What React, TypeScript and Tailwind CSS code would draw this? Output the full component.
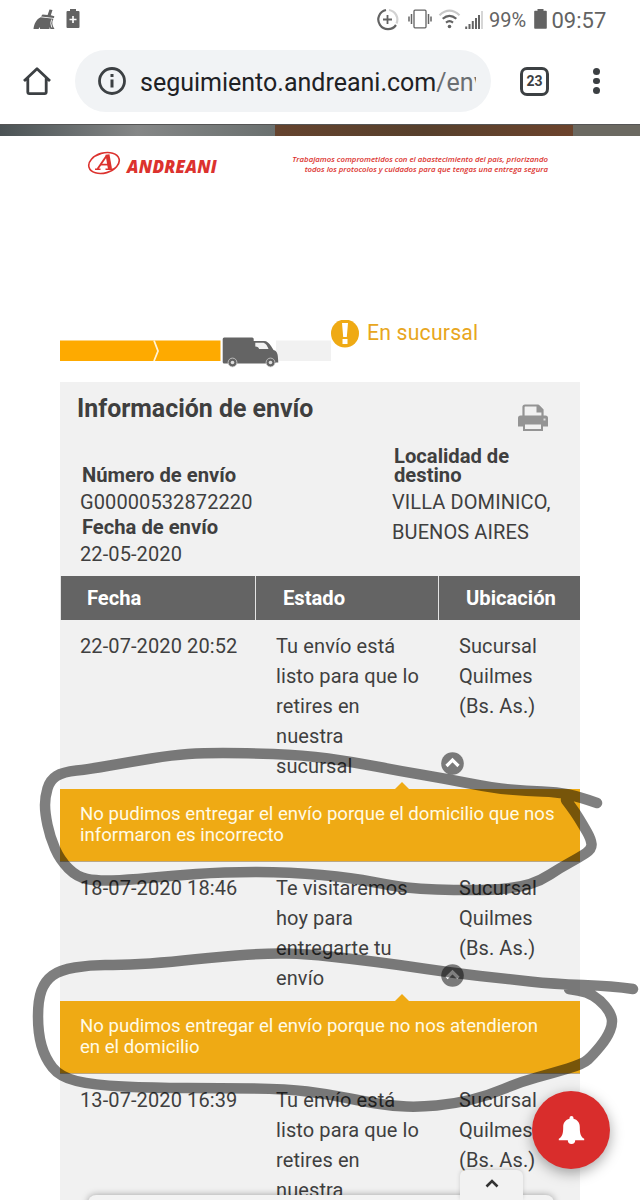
type Point = [number, number];

type Movement = {
  date: string;
  status: string[];
  place: string[];
  alert?: string[];
};

const movements: Movement[] = [
  {
    date: "22-07-2020 20:52",
    status: ["Tu envío está", "listo para que lo", "retires en", "nuestra", "sucursal"],
    place: ["Sucursal", "Quilmes", "(Bs. As.)"],
    alert: ["No pudimos entregar el envío porque el domicilio que nos", "informaron es incorrecto"]
  },
  {
    date: "18-07-2020 18:46",
    status: ["Te visitaremos", "hoy para", "entregarte tu", "envío"],
    place: ["Sucursal", "Quilmes", "(Bs. As.)"],
    alert: ["No pudimos entregar el envío porque no nos atendieron", "en el domicilio"]
  },
  {
    date: "13-07-2020 16:39",
    status: ["Tu envío está", "listo para que lo", "retires en", "nuestra"],
    place: ["Sucursal", "Quilmes", "(Bs. As.)"]
  }
];

const firstLoop: Point[] = [
  [597, 803], [580, 797], [557, 792], [527, 791], [493, 788], [447, 779], [400, 771], [353, 762],
  [303, 755], [243, 753], [203, 753], [173, 755], [130, 762], [90, 769], [63, 772], [50, 780],
  [45, 797], [45, 813], [50, 837], [60, 860], [77, 877], [97, 881], [127, 880], [170, 876],
  [223, 872], [290, 872], [353, 878], [393, 886], [420, 889], [453, 890], [493, 890], [520, 887],
  [540, 881], [560, 868], [580, 857], [592, 849], [591, 839], [583, 825], [575, 812], [566, 800]
];

const secondLoop: Point[] = [
  [633, 989], [613, 986], [553, 984], [507, 979], [453, 973], [400, 965], [353, 959], [307, 954],
  [267, 953], [207, 958], [160, 963], [120, 965], [90, 965], [60, 970], [45, 981], [38, 1000],
  [38, 1033], [45, 1058], [60, 1077], [93, 1085], [153, 1088], [220, 1088], [287, 1089], [327, 1094],
  [367, 1102], [393, 1106], [420, 1107], [453, 1104], [487, 1096], [520, 1082], [553, 1073],
  [583, 1064], [593, 1055], [607, 1038], [613, 1023], [610, 1012], [600, 1000], [587, 992], [569, 989]
];

// joins the points with curves that pass through the middle of each segment
function smooth(points: Point[]) {
  let d = `M${points[0][0]} ${points[0][1]}`;
  for (let i = 1; i < points.length - 1; i++) {
    const [x, y] = points[i];
    const [nx, ny] = points[i + 1];
    d += ` Q${x} ${y} ${(x + nx) / 2} ${(y + ny) / 2}`;
  }
  const last = points[points.length - 1];
  return `${d} L${last[0]} ${last[1]}`;
}

function StatusBar() {
  return (
    <div className="flex h-10 items-center pl-[33px] text-[#636363]">
      <svg className="-mt-px" width="22" height="22" viewBox="0 0 22 22" fill="currentColor">
        <path d="M16.5 0.5 L19.5 1 L17.8 6.2 L21.3 7.3 L21 9 L8 7.4 L9.5 5.6 L14.6 6 Z" />
        <path d="M7.6 8.2 L20.5 9.8 C18.5 13 19 16.5 21.5 20 H17.5 L16.5 18 V20 H7 L7 18 L5.5 20 H0.5 C1 15 3 10.5 7.6 8.2Z" />
        <path d="M18.6 10.5 Q16.8 14 18.8 18.5" fill="none" stroke="#fff" strokeWidth="0.9" />
      </svg>
      <svg className="-mt-0.5 ml-[11px]" width="14" height="20" viewBox="0 0 14 20">
        <path d="M4 0h6v2h2.5a1 1 0 0 1 1 1v15a1 1 0 0 1-1 1h-11a1 1 0 0 1-1-1V3a1 1 0 0 1 1-1H4z" fill="currentColor" />
        <path d="M7 7v7M3.5 10.5h7" stroke="#fff" strokeWidth="1.6" />
      </svg>
      <svg className="-mt-0.5 ml-[296px]" width="23" height="23" viewBox="0 0 23 23" fill="none" strokeWidth="2.2">
        <path d="M13 2a9.7 9.7 0 0 1 7.5 13.5" stroke="#d2d2d2" />
        <path d="M10 2a9.7 9.7 0 1 0 10 15" stroke="currentColor" />
        <path d="M11.5 7v9M7 11.5h9" stroke="currentColor" strokeWidth="1.8" />
      </svg>
      <svg className="-mt-0.5 ml-[9px]" width="24" height="20" viewBox="0 0 24 20" fill="none" stroke="currentColor" strokeWidth="1.3">
        <rect x="6" y="1.2" width="12" height="17.6" rx="1" />
        <path d="M3.5 5v10M1 7.5v5M20.5 5v10M23 7.5v5" strokeWidth="1.5" />
      </svg>
      <svg className="-mt-0.5 ml-[6px]" width="23" height="20" viewBox="0 0 23 20" fill="none" strokeWidth="2.2">
        <path d="M1.5 6.2Q11.5 -2.8 21.5 6.2" stroke="#c8c8c8" />
        <path d="M4.7 9.8Q11.5 3.8 18.3 9.8M8 13.6Q11.5 10.8 15 13.6" stroke="currentColor" />
        <circle cx="11.5" cy="17.5" r="1.8" fill="currentColor" />
      </svg>
      <svg className="-mt-0.5 ml-[4px]" width="18" height="19" viewBox="0 0 18 19" fill="none" stroke="currentColor" strokeWidth="2">
        <path d="M1.2 16.5V19M4.5 14V19M7.8 11V19M11 8V19M14 5V19" />
        <path d="M17 1V19" stroke="#c8c8c8" strokeWidth="1.5" />
      </svg>
      <span className="ml-[6px] w-[45px] text-[20px] whitespace-nowrap">99%</span>
      <svg className="-mt-0.5" width="13" height="20" viewBox="0 0 13 20" fill="currentColor">
        <path d="M3.5 0h6v1.7H12a.8.8 0 0 1 .8.8V19a.8.8 0 0 1-.8.8H1a.8.8 0 0 1-.8-.8V2.5A.8.8 0 0 1 1 1.7h2.5z" />
      </svg>
      <span className="ml-[4.5px] text-[22px]">09:57</span>
    </div>
  );
}

function Toolbar() {
  return (
    <div className="flex h-[84px] items-center pb-0.5 pl-[23px] text-[#3c4043]">
      <svg width="28" height="28" viewBox="0 0 28 28" fill="none" stroke="currentColor" strokeWidth="2.8">
        <path d="M1 14 14 1.8 27 14M4.8 11V25a1.6 1.6 0 0 0 1.6 1.6h15.2A1.6 1.6 0 0 0 23.2 25V11" strokeLinejoin="round" />
      </svg>
      <div className="ml-6 flex h-[62px] w-[416px] items-center rounded-full bg-[#f1f3f5] pl-[23px]">
        <svg width="28" height="28" viewBox="0 0 28 28" fill="none" stroke="currentColor">
          <circle cx="14" cy="14" r="12.5" strokeWidth="2.8" />
          <path d="M14 12.5v8M14 7v3" strokeWidth="3" />
        </svg>
        <div className="mt-[3px] ml-[14px] w-[336px] overflow-hidden text-[25px] leading-[34px] whitespace-nowrap text-[#202124]">
          seguimiento.andreani.com<span className="text-[#6a6e72]">/env</span>
        </div>
      </div>
      <div className="ml-[29px] flex size-[29px] items-center justify-center rounded-[7px] border-[3px] border-[#3c4043] text-[14px] font-bold">
        23
      </div>
      <div className="ml-[44px] flex flex-col gap-[3px]">
        <i className="size-[6.5px] rounded-full bg-[#3c4043]" />
        <i className="size-[6.5px] rounded-full bg-[#3c4043]" />
        <i className="size-[6.5px] rounded-full bg-[#3c4043]" />
      </div>
    </div>
  );
}

function Brand() {
  return (
    <div className="flex h-[184px] items-start pt-[15px] pl-[87px] text-[#dc322e]">
      <svg width="34" height="24" viewBox="0 0 34 24" fill="none" stroke="currentColor">
        <ellipse cx="17" cy="12" rx="15.6" ry="10" strokeWidth="1.6" transform="rotate(-16 17 12)" />
        {/* slanted monogram inside the oval */}
        <path d="M10.5 18 19.8 4.5" strokeWidth="1.9" />
        <path d="M13.5 13.6H22" strokeWidth="1.7" />
        <path d="M20.5 3.5 23 18" strokeWidth="4" />
        <path d="M8 18.3h5.5M18.5 18.3h8.5" strokeWidth="1.4" />
      </svg>
      <span className="mt-[6px] ml-[6px] w-[165px] font-['Open_Sans'] text-[17px] leading-[20px] font-extrabold tracking-[0.25px] italic">
        ANDREANI
      </span>
      <p className="mt-1 w-[256px] text-right font-['Open_Sans'] text-[7.8px] leading-[9.5px] font-semibold whitespace-nowrap italic">
        Trabajamos comprometidos con el abastecimiento del país, priorizando
        <br />
        todos los protocolos y cuidados para que tengas una entrega segura
      </p>
    </div>
  );
}

function Progress() {
  return (
    <div className="flex h-[62px] items-start pl-[60px]">
      <svg className="mt-4 shrink-0" width="271" height="32" viewBox="0 0 271 32">
        <path d="M0 4.5h160.500V25H0z" fill="#feaa00" />
        <path d="M94 4.5 98 15 94 25" fill="none" stroke="#fff3d6" strokeWidth="1.8" />
        <path d="M216 4.5h55V25h-55z" fill="#f1f1f1" />
        <path
          d="M162.7 3a1.5 1.5 0 0 1 1.5-1.5h28A1.5 1.5 0 0 1 193.7 3v2H204c3 0 5 2 7 5l2.5 4c3 .8 4 3 4.3 6l.5 6.5h-2.5l-1 1H164.200a1.5 1.5 0 0 1-1.5-1.5z"
          fill="#646464"
        />
        <path d="M195.3 6.8h7.2c3 0 4.5 2.5 6 6.2H199c0-1.3-1.5-2.5-3.7-2.5z" fill="#f1f1f1" />
        <g fill="#646464" stroke="#d0d0d0" strokeWidth="0.8">
          <circle cx="172.5" cy="26.5" r="4.4" />
          <circle cx="210.5" cy="26.5" r="4.4" />
        </g>
        <circle cx="172.5" cy="26.5" r="1.8" fill="#ddd" />
        <circle cx="210.5" cy="26.5" r="1.8" fill="#ddd" />
      </svg>
      <svg className="shrink-0" width="28" height="28" viewBox="0 0 28 28">
        <circle cx="14" cy="13.5" r="14" fill="#efaa14" />
        <path d="M11 3h6l-1.2 14h-3.6zM11.5 19h5v5h-5z" fill="#fff" />
      </svg>
      <span className="ml-2 text-[21.2px] leading-[26px] tracking-[0.2px] whitespace-nowrap text-[#e8a620]">En sucursal</span>
    </div>
  );
}

function PrinterIcon() {
  return (
    <svg className="ml-[124px]" width="32" height="28" viewBox="0 0 32 28">
      <path d="M6.5 12V3a1.5 1.5 0 0 1 1.5-1.5h13L25.5 6v6" fill="#f1f1f1" stroke="#949494" strokeWidth="2.2" />
      <path d="M19.5 1.5h3l3.5 4v3h-6.5z" fill="#949494" />
      <path d="M3.5 11.5h25a2.5 2.5 0 0 1 2.5 2.5v8.5H1V14a2.5 2.5 0 0 1 2.5-2.5z" fill="#949494" />
      <path d="M7 19.5h18V26H7z" fill="#f1f1f1" stroke="#949494" strokeWidth="2" />
      <path d="M26.5 14.5h2v2h-2z" fill="#ddd" />
    </svg>
  );
}

function Alert({ lines }: { lines: string[] }) {
  return (
    <div className="relative h-[73px] border-b border-[#b9a888] bg-[#efaa14] pt-[15px] pl-5 text-[18.6px] leading-[21px] whitespace-nowrap text-[#fffbe6]">
      <svg className="absolute -top-[7px] left-[335px]" width="14" height="7" viewBox="0 0 14 7">
        <path d="M0 7 7 0 14 7z" fill="#efaa14" />
      </svg>
      {/* collapse toggle */}
      <svg className="absolute -top-[37px] left-[381px]" width="23" height="23" viewBox="0 0 23 23">
        <circle cx="11.5" cy="11.5" r="11.3" fill="#646464" fillOpacity="0.85" />
        <path d="M5.5 14 11.5 8 17.5 14" fill="none" stroke="#fff" strokeWidth="3.2" />
      </svg>
      {lines.map((line) => (
        <div key={line}>{line}</div>
      ))}
    </div>
  );
}

function Lines({ items }: { items: string[] }) {
  return (
    <div>
      {items.map((item) => (
        <div key={item}>{item}</div>
      ))}
    </div>
  );
}

function Shipment() {
  return (
    <div className="ml-[60px] w-[520px] bg-[#f1f1f1] whitespace-nowrap text-[#3f3f3f]">
      <div className="flex h-[194px]">
        <div className="w-[333px] pt-3 pl-[17px]">
          <h2 className="text-[24.9px] leading-[30px] font-bold">Información de envío</h2>
          <div className="mt-[37px] pl-[3px] text-[20px]">
            <h3 className="pl-0.5 text-[20.2px] leading-[28px] font-bold">Número de envío</h3>
            <p className="leading-[26px] tracking-[0.1px]">G00000532872220</p>
            <h3 className="pl-0.5 text-[20.2px] leading-[25px] font-bold">Fecha de envío</h3>
            <p className="leading-[28px] tracking-[0.1px]">22-05-2020</p>
          </div>
        </div>
        <div className="pt-[22px] text-[20px]">
          <PrinterIcon />
          <h3 className="mt-[15px] pl-px text-[20.2px] leading-[19px] font-bold">
            Localidad de
            <br />
            destino
          </h3>
          <p className="mt-[2px] -ml-px leading-[30px] tracking-[0.1px]">
            VILLA DOMINICO,
            <br />
            BUENOS AIRES
          </p>
        </div>
      </div>
      <div className="grid h-11 grid-cols-[194px_182px_141px] gap-px bg-[#e4e4e4] pl-px text-[20.2px] leading-[44px] font-bold text-white">
        <div className="bg-[#646464] pl-[26px]">Fecha</div>
        <div className="bg-[#646464] pl-[27px]">Estado</div>
        <div className="bg-[#646464] pl-[27px]">Ubicación</div>
      </div>
      {movements.map((m) => (
        <div key={m.date}>
          <div className="grid grid-cols-[196px_183px_141px] pt-[10.5px] pb-[8.5px] pl-5 text-[20px] leading-[30px] tracking-[0.1px]">
            <div>{m.date}</div>
            <Lines items={m.status} />
            <Lines items={m.place} />
          </div>
          {m.alert && <Alert lines={m.alert} />}
        </div>
      ))}
    </div>
  );
}

export default function App() {
  return (
    <div className="relative h-[1200px] w-[640px] overflow-hidden bg-white font-[Roboto,sans-serif]">
      <StatusBar />
      <Toolbar />
      <div className="flex h-3 border-t border-[#555]">
        <div className="w-[275px] bg-linear-to-r from-[#4b5355] via-[#858787] to-[#6a706f]" />
        <div className="w-[298px] bg-linear-to-r from-[#65432e] via-[#57402c] to-[#6c432c]" />
        <div className="grow bg-[#6b6961]" />
      </div>
      <Brand />
      <Progress />
      <Shipment />

      <div className="absolute top-[1195px] left-[88px] h-5 w-[466px] rounded-lg bg-[#f3f3f3] shadow-[0_0_7px_rgba(0,0,0,0.35)]" />
      <div className="absolute top-[1170px] left-[460px] flex h-[30px] w-[63px] justify-center rounded-t-md bg-[#f2f2f2] pt-2 shadow-[0_-1px_4px_rgba(0,0,0,0.15)]">
        <svg width="14" height="10" viewBox="0 0 14 10" fill="none" stroke="#333" strokeWidth="2.6">
          <path d="M1.5 8.5 7 3 12.5 8.5" />
        </svg>
      </div>
      <div className="absolute top-[1091px] left-[532px] flex size-[78px] items-center justify-center rounded-full bg-[#d92d2c] shadow-[0_4px_14px_rgba(0,0,0,0.35)]">
        <svg width="27" height="28" viewBox="0 0 27 28" fill="#fff">
          <path d="M13.5 0a2 2 0 0 1 2 2v.8c4 .9 6.3 4 6.3 8.4 0 6 .8 9.5 4.4 11.5v1.6H.8v-1.6c3.6-2 4.4-5.5 4.4-11.5 0-4.4 2.3-7.5 6.3-8.4V2a2 2 0 0 1 2-2zM9.800 24.300h7.400a3.700 3.700 0 0 1-7.400 0z" />
        </svg>
      </div>

      <svg
        className="pointer-events-none absolute inset-0"
        width="640"
        height="1200"
        viewBox="0 0 640 1200"
        fill="none"
        stroke="#000"
        strokeOpacity="0.5"
        strokeWidth="10.5"
        strokeLinecap="round"
        strokeLinejoin="round"
      >
        <path d={smooth(firstLoop)} />
        <path d={smooth(secondLoop)} />
      </svg>
    </div>
  );
}
